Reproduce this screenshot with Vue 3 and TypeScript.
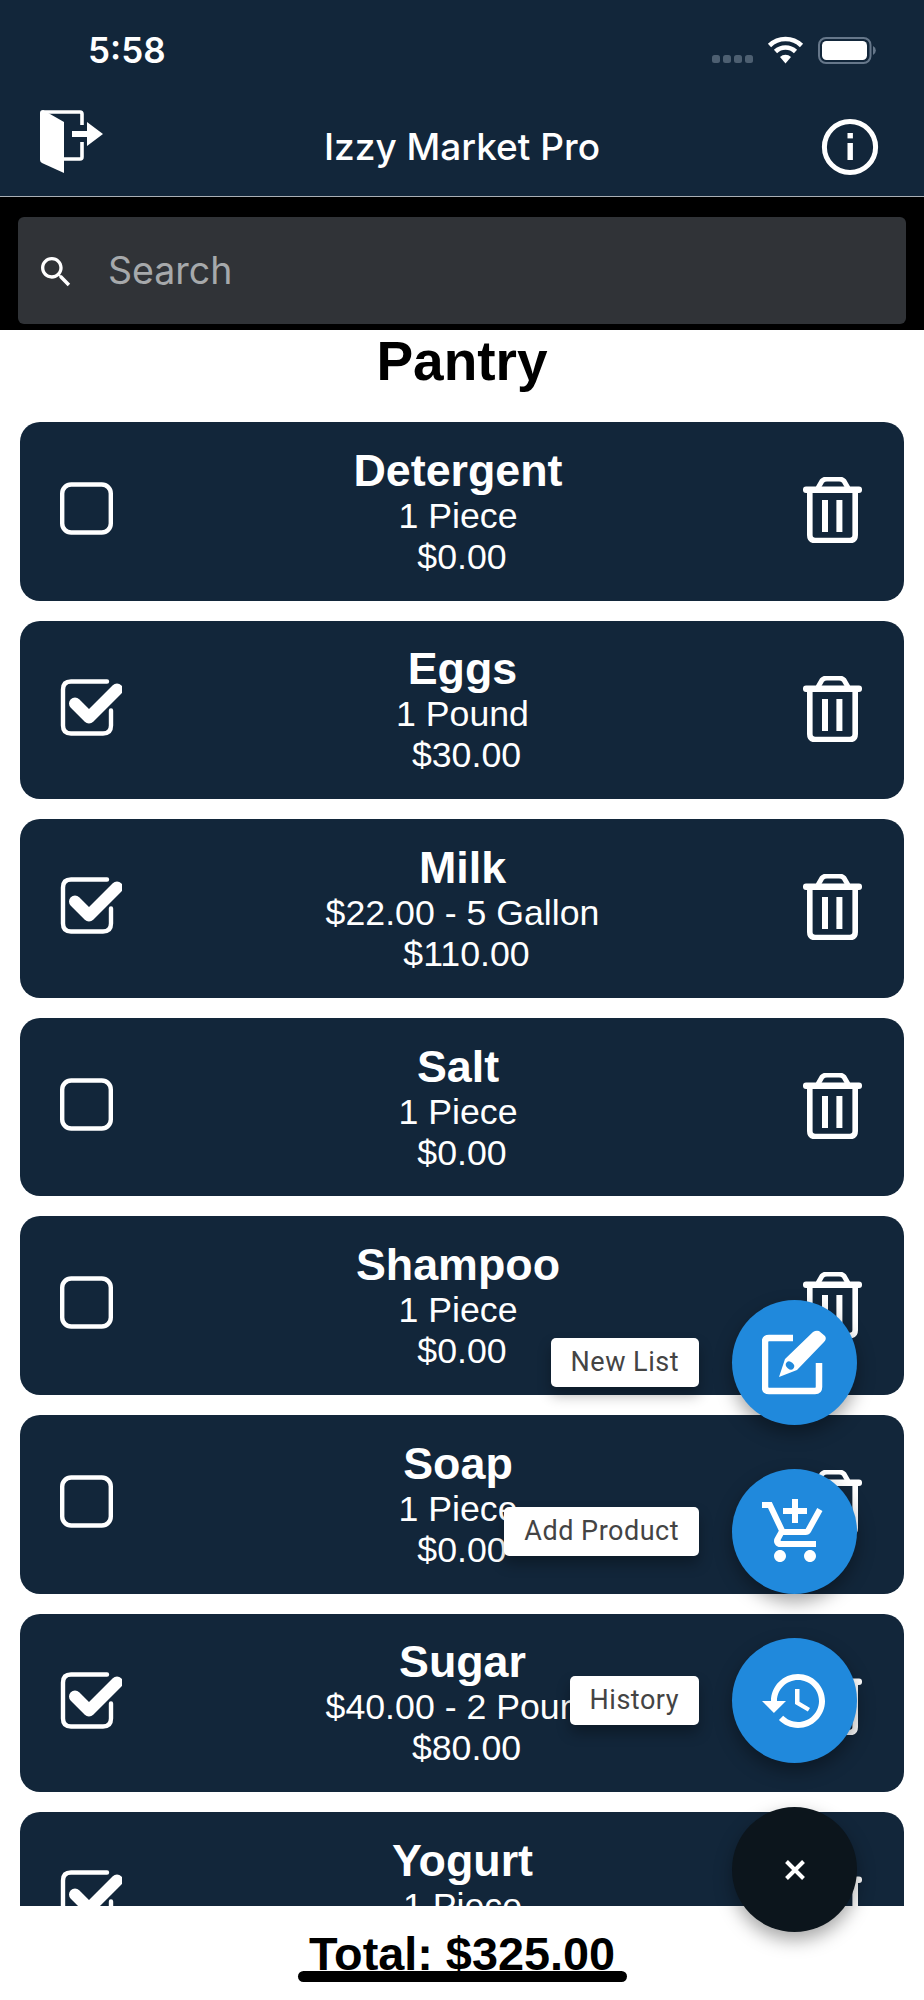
<script setup lang="ts">
interface Item {
  name: string
  detail: string
  price: string
  checked: boolean
}
const items: Item[] = [
  { name: 'Detergent', detail: '1 Piece', price: '$0.00', checked: false },
  { name: 'Eggs', detail: '1 Pound', price: '$30.00', checked: true },
  { name: 'Milk', detail: '$22.00 - 5 Gallon', price: '$110.00', checked: true },
  { name: 'Salt', detail: '1 Piece', price: '$0.00', checked: false },
  { name: 'Shampoo', detail: '1 Piece', price: '$0.00', checked: false },
  { name: 'Soap', detail: '1 Piece', price: '$0.00', checked: false },
  { name: 'Sugar', detail: '$40.00 - 2 Pound', price: '$80.00', checked: true },
  { name: 'Yogurt', detail: '1 Piece', price: '$105.00', checked: true }
]
</script>

<template>
  <div class="screen">
    <header class="top">
      <div class="status">
        <span class="time">5:58</span>
        <svg class="status-icons" viewBox="700 0 224 98" width="224" height="98">
          <g fill="#4d5f71">
            <rect x="712" y="55" width="8" height="8" rx="2.5" />
            <rect x="723" y="55" width="8" height="8" rx="2.5" />
            <rect x="734" y="55" width="8" height="8" rx="2.5" />
            <rect x="745" y="55" width="8" height="8" rx="2.5" />
          </g>
          <g fill="none" stroke="#fff" stroke-width="4.6">
            <path d="M769.5 45.500a23 23 0 0 1 32 0" />
            <path d="M775.500 51.500a14.500 14.500 0 0 1 20 0" />
          </g>
          <path d="M780 57a8 8 0 0 1 11 0l-5.500 6.500z" fill="#fff" />
          <rect x="819" y="38" width="51.500" height="25" rx="7" fill="none" stroke="#66778a" stroke-width="2" />
          <rect x="822" y="41" width="45" height="19" rx="4.500" fill="#fff" />
          <path d="M873 46a5 5 0 0 1 0 9z" fill="#66778a" />
        </svg>
      </div>
      <nav class="nav">
        <svg class="nav-icon" viewBox="0 98 110 98" width="110" height="98">
          <path d="M40 113q0-3 3-3l21 12v51l-22-10q-2-1-2-3z" fill="#fff" />
          <path d="M43 112h37q2 0 2 2v11M82 142v15q0 2-2 2H64" fill="none" stroke="#fff" stroke-width="3.6" />
          <path d="M72 131h15v-9l16 12-16 12v-9H72z" fill="#fff" />
        </svg>
        <span class="title">Izzy Market Pro</span>
        <svg class="nav-icon" viewBox="814 98 110 98" width="110" height="98">
          <circle cx="850" cy="147" r="25.600" fill="none" stroke="#fff" stroke-width="5" />
          <rect x="847.500" y="133" width="5.400" height="5.400" fill="#fff" />
          <rect x="847.500" y="143" width="5.400" height="17" fill="#fff" />
        </svg>
      </nav>
    </header>

    <div class="search-wrap">
      <div class="search">
        <svg class="search-icon" viewBox="0 0 24 24" width="40" height="40">
          <path fill="#fff" d="M15.5 14h-.79l-.28-.27C15.41 12.59 16 11.11 16 9.5 16 5.91 13.09 3 9.5 3S3 5.91 3 9.5 5.91 16 9.5 16c1.61 0 3.09-.59 4.23-1.57l.27.28v.79l5 4.99L20.49 19l-4.99-5zm-6 0C7.01 14 5 11.99 5 9.5S7.01 5 9.5 5 14 7.01 14 9.5 11.99 14 9.5 14z" />
        </svg>
        <span class="search-text">Search</span>
      </div>
    </div>

    <h1 class="heading">Pantry</h1>

    <div class="list">
      <div v-for="item in items" :key="item.name" class="card">
        <svg v-if="item.checked" class="check on" viewBox="60 0 62 66" width="62" height="66">
          <path d="M107 8.500H71q-8 0-8 8V52.500q0 8 8 8h32q8 0 8-8V37.500" fill="none" stroke="#fff" stroke-width="4.4" stroke-linecap="round" />
          <path d="M75 30.500l14 14 28-28" fill="none" stroke="#fff" stroke-width="12" stroke-linejoin="round" stroke-linecap="round" />
        </svg>
        <svg v-else class="check off" viewBox="60 0 53 60" width="53" height="60">
          <rect x="62.200" y="8.500" width="48.600" height="48" rx="9" fill="none" stroke="#fff" stroke-width="4.4" />
        </svg>
        <div class="info">
          <div class="name">{{ item.name }}</div>
          <div class="detail">{{ item.detail }}</div>
          <div class="detail price">{{ item.price }}</div>
        </div>
        <svg class="trash" viewBox="803 477 59 66" width="59" height="66">
          <path d="M818 488l4-7q2-2 5-2h12q3 0 5 2l4 7" fill="none" stroke="#fff" stroke-width="5" />
          <rect x="803" y="486.500" width="59" height="6.500" rx="3" fill="#fff" />
          <path d="M809.800 491v44q0 5.500 5.500 5.500h34.400q5.500 0 5.500-5.500v-44" fill="none" stroke="#fff" stroke-width="5.600" />
          <rect x="822" y="500" width="6" height="32" fill="#fff" />
          <rect x="836.400" y="500" width="6" height="32" fill="#fff" />
        </svg>
      </div>
    </div>

    <footer class="footer">
      <span class="total">Total: $325.00</span>
    </footer>
    <div class="home-bar"></div>

    <div class="fabs">
      <div class="fab-row">
        <span class="tag">New List</span>
        <div class="fab">
          <svg viewBox="762 1324 66 68" width="66" height="68">
            <path d="M793 1333h-24q-4 0-4 4v45q0 4 4 4h46q4 0 4-4v-24" fill="none" stroke="#fff" stroke-width="6.5" />
            <path d="M779 1372l6-18 28-27q3-2 6-1l6 5q2 3-1 6l-27 28z" fill="#fff" />
            <ellipse cx="790" cy="1360.500" rx="4.500" ry="3.500" transform="rotate(40 790 1360.500)" fill="#2089dc" />
          </svg>
        </div>
      </div>
      <div class="fab-row">
        <span class="tag">Add Product</span>
        <div class="fab">
          <svg viewBox="0 0 24 24" width="72" height="72">
            <path fill="#fff" d="M11 9h2V6h3V4h-3V1h-2v3H8v2h3v3zm-4 9c-1.100 0-1.990.9-1.990 2S5.900 22 7 22s2-.9 2-2-.9-2-2-2zm10 0c-1.100 0-1.990.9-1.990 2s.89 2 1.990 2 2-.9 2-2-.9-2-2-2zm-9.830-3.250l.03-.12.9-1.630h7.450c.75 0 1.410-.41 1.750-1.030l3.860-7.010L19.420 4h-.01l-1.100 2-2.760 5H8.530l-.13-.27L6.160 6l-.95-2-.94-2H1v2h2l3.600 7.590-1.350 2.450c-.16.28-.25.61-.25.96 0 1.100.9 2 2 2h12v-2H7.420c-.13 0-.25-.11-.25-.25z" />
          </svg>
        </div>
      </div>
      <div class="fab-row">
        <span class="tag">History</span>
        <div class="fab">
          <svg viewBox="0 0 24 24" width="72" height="72">
            <path fill="#fff" d="M13 3c-4.970 0-9 4.030-9 9H1l3.890 3.890.07.14L9 12H6c0-3.870 3.130-7 7-7s7 3.130 7 7-3.130 7-7 7c-1.930 0-3.680-.79-4.940-2.060l-1.420 1.420C8.270 19.990 10.510 21 13 21c4.970 0 9-4.030 9-9s-4.030-9-9-9zm-1 5v5l4.280 2.540.72-1.210-3.500-2.080V8H12z" />
          </svg>
        </div>
      </div>
      <div class="fab-row">
        <div class="fab dark">
          <svg viewBox="0 0 24 24" width="24" height="24">
            <path d="M3.500 3.500l17 17M20.500 3.500l-17 17" stroke="#fff" stroke-width="4" fill="none" />
          </svg>
        </div>
      </div>
    </div>
  </div>
</template>

<style scoped>
.screen {
  position: relative;
  width: 924px;
  height: 2000px;
  overflow: hidden;
  display: flex;
  flex-direction: column;
  background: #fff;
  font-family: "Liberation Sans", Arial, sans-serif;
}
.top {
  background: #12263a;
  height: 197px;
  box-sizing: border-box;
  border-bottom: 1px solid #a9afb5;
  flex: none;
}
.status {
  height: 98px;
  display: flex;
  justify-content: space-between;
  align-items: center;
}
.time {
  margin-left: 88px;
  margin-top: 2px;
  font: 600 35px/40px Inter, sans-serif;
  color: #fff;
}
.nav {
  height: 98px;
  display: flex;
  align-items: center;
}
.nav-icon {
  flex: none;
}
.title {
  flex: 1;
  text-align: center;
  color: #fff;
  font: 500 37px/44px Inter, sans-serif;
}
.search-wrap {
  flex: none;
  height: 133px;
  box-sizing: border-box;
  background: #000;
  padding: 20px 18px 6px;
}
.search {
  height: 107px;
  background: #303337;
  border-radius: 6px;
  display: flex;
  align-items: center;
  padding-left: 18px;
  gap: 32px;
}
.search-icon {
  margin-top: 3px;
}
.search-text {
  color: #a6a9ab;
  font: 400 37.5px/44px Inter, sans-serif;
}
.heading {
  flex: none;
  margin: 1px 0 0;
  text-align: center;
  color: #000;
  font-size: 55px;
  line-height: 61px;
  font-weight: 700;
}
.list {
  flex: 1;
  min-height: 0;
  overflow: hidden;
  padding: 30px 20px 0;
  display: flex;
  flex-direction: column;
  gap: 20px;
}
.card {
  flex: none;
  height: 178.6px;
  box-sizing: border-box;
  background: #12263a;
  border-radius: 20px;
  display: flex;
  align-items: center;
  padding: 0 42px 0 40px;
  color: #fff;
}
.check {
  flex: none;
}
.check.on {
  margin-top: -8px;
}
.check.off {
  margin-top: -11px;
}
.info {
  flex: 1;
  text-align: center;
}
.name {
  font-size: 44.8px;
  font-weight: 700;
  line-height: 51px;
}
.detail {
  font-size: 35.7px;
  line-height: 41px;
}
.price {
  padding-left: 8px;
}
.trash {
  flex: none;
  margin-top: -2px;
}
.footer {
  flex: none;
  height: 94px;
  text-align: center;
  padding-top: 22px;
  box-sizing: border-box;
}
.total {
  font-size: 46.8px;
  line-height: 53px;
  font-weight: 700;
  color: #000;
  text-decoration: underline;
}
.home-bar {
  position: absolute;
  left: 298px;
  top: 1971px;
  width: 329px;
  height: 11px;
  border-radius: 6px;
  background: #000;
}
.fabs {
  position: absolute;
  right: 67px;
  top: 1300px;
  display: flex;
  flex-direction: column;
  align-items: flex-end;
  gap: 44px;
}
.fab-row {
  display: flex;
  align-items: center;
  gap: 33px;
}
.fab {
  width: 125px;
  height: 125px;
  border-radius: 50%;
  background: #2089dc;
  display: flex;
  align-items: center;
  justify-content: center;
  box-shadow: 0 8px 18px rgba(0, 0, 0, 0.35);
}
.fab.dark {
  background: #0c151c;
}
.tag {
  height: 49px;
  box-sizing: border-box;
  padding: 0 20px;
  background: #fff;
  border-radius: 5px;
  color: #444;
  font: 400 27px/49px Roboto, sans-serif;
  letter-spacing: 0.5px;
  box-shadow: 0 8px 14px rgba(0, 0, 0, 0.3);
}
</style>

<style>
html,
body {
  margin: 0;
  padding: 0;
}
</style>
